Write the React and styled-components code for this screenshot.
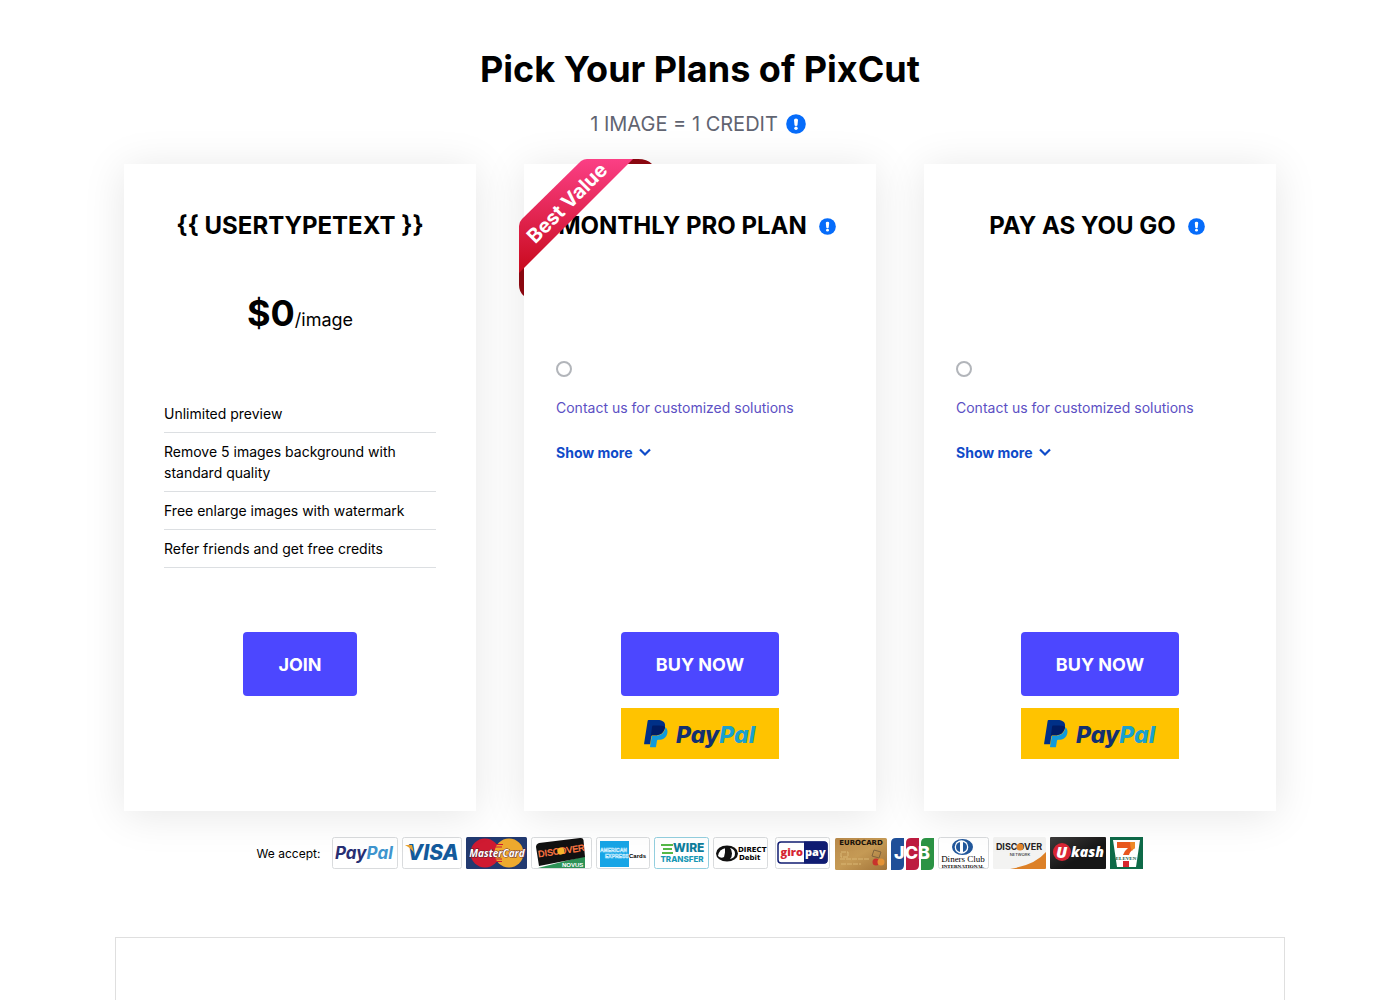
import styled, { createGlobalStyle } from 'styled-components'

const GlobalStyle = createGlobalStyle`
    * {
        box-sizing: border-box;
    }

    body {
        margin: 0;
        background: #fff;
        color: #000;
        font-family: Inter, "Liberation Sans", sans-serif;
        font-size: 14px;
        line-height: 21px;
    }
`

const Page = styled.main`
    padding-top: 47px;
    overflow: hidden;
`

const Heading = styled.h1`
    margin: 0;
    text-align: center;
    font-size: 36px;
    line-height: 44px;
    font-weight: 700;
`

const SubHeading = styled.p`
    display: flex;
    align-items: center;
    justify-content: center;
    gap: 8px;
    margin: 17px 0 24px;
    padding-right: 4px;
    color: #616471;
    font-size: 20px;
    line-height: 32px;
`

const Plans = styled.section`
    display: flex;
    align-items: stretch;
    gap: 48px;
    max-width: 1200px;
    margin: 0 auto;
    padding: 0 24px;
`

const Card = styled.article`
    position: relative;
    display: flex;
    flex: 1;
    flex-direction: column;
    padding: 44px 0 52px;
    background: #fff;
    box-shadow: 0 4px 40px rgba(0, 0, 0, 0.1);
`

const PlanTitle = styled.h2`
    display: flex;
    align-items: center;
    justify-content: center;
    gap: 12px;
    margin: 0;
    padding-right: ${({ $icon }) => ($icon ? 6 : 0)}px;
    font-size: 24px;
    line-height: 36px;
    font-weight: 700;
    white-space: nowrap;
`

const Price = styled.p`
    margin: 44px 0 50px;
    text-align: center;
    font-size: 18px;
    line-height: 51px;

    strong {
        font-size: 36px;
    }
`

const Features = styled.ul`
    margin: 0;
    padding: 0 40px;
    list-style: none;

    li {
        padding: 8px 0;
        border-bottom: 1px solid #dcdfe2;
    }
`

const Options = styled.div`
    display: flex;
    flex-direction: column;
    align-items: flex-start;
    margin-top: 117px;
    padding: 0 32px;
`

const Radio = styled.input`
    appearance: none;
    width: 16px;
    height: 16px;
    margin: 0;
    border: 2px solid #b2b5ba;
    border-radius: 50%;
    background: #fff;

    &:checked {
        border-color: #4c47ff;
    }
`

const ContactLink = styled.a`
    margin: 20px 0 24px;
    color: #5c50c4;
    text-decoration: none;
`

const ShowMore = styled.button`
    display: flex;
    align-items: center;
    gap: 6px;
    padding: 0;
    border: 0;
    background: none;
    color: #0f4bc9;
    font: inherit;
    font-weight: 700;
    cursor: pointer;
`

const Actions = styled.div`
    display: flex;
    flex-direction: column;
    align-items: center;
    gap: 12px;
    min-height: 127px;
    margin-top: ${({ $top }) => $top}px;
`

const BuyButton = styled.button`
    min-width: ${({ $wide }) => ($wide ? 158 : 114)}px;
    height: 64px;
    border: 0;
    border-radius: 4px;
    background: #4c47ff;
    color: #fff;
    font: inherit;
    font-size: 18px;
    font-weight: 700;
    cursor: pointer;
`

const PayPalButton = styled.button`
    display: flex;
    width: 158px;
    height: 51px;
    padding: 0;
    border: 0;
    background: #ffc300;
    cursor: pointer;
`

const Ribbon = styled.svg`
    position: absolute;
    top: -5px;
    left: -5px;
`

const Accept = styled.section`
    display: flex;
    align-items: center;
    justify-content: center;
    gap: 12px;
    margin-top: 25px;
    font-size: 12px;
`

const Methods = styled.div`
    display: flex;
    gap: 4px;
`

const Panel = styled.section`
    max-width: 1170px;
    min-height: 240px;
    margin: 67px auto 0;
    border: 1px solid #dfdfdf;
`

const InfoIcon = ({ size }) => (
    <svg width={size} height={size} viewBox="0 0 20 20" aria-hidden="true">
        <circle cx="10" cy="10" r="9.800" fill="#066cfa" />
        <path d="M8 6a2 1.500 0 0 1 4 0l-.500 5a1.500 1 0 0 1-3 0z" fill="#fff" />
        <circle cx="10" cy="14.300" r="1.700" fill="#fff" />
    </svg>
)

const Chevron = () => (
    <svg width="13" height="13" viewBox="0 0 13 13" aria-hidden="true">
        <path d="M1 3.500l5 5 5-5" fill="none" stroke="currentColor" strokeWidth="2.200" />
    </svg>
)

const BestValue = () => (
    <Ribbon width="134" height="138" viewBox="0 0 134 138">
        <defs>
            <linearGradient id="ribbon" x1="0" y1="0" x2="0" y2="1">
                <stop offset="0" stopColor="#fb3f85" />
                <stop offset="1" stopColor="#c80a1c" />
            </linearGradient>
        </defs>
        <path d="M106 0h13q9 0 14 5h-27zM0 106v20q0 7 5 11v-31z" fill="#8a0710" />
        <path d="M62 2q3-2 6-2h46L0 114V67q0-4 3-7z" fill="url(#ribbon)" />
        <text
            x="48"
            y="51"
            transform="rotate(-45 48 44)"
            textAnchor="middle"
            fontSize="20"
            fontWeight="700"
            fill="#fff"
        >
            Best Value
        </text>
    </Ribbon>
)

const PayPalLogo = () => (
    <svg width="158" height="51" viewBox="0 0 158 51" role="img" aria-label="PayPal">
        <g transform="translate(21 12) scale(1.14)">
            <path
                d="M21.222 6.917a3.35 3.35 0 0 0-.607-.541c-.93 5.032-4.046 7.455-9.179 7.455h-2.19a.563.563 0 0 0-.556.479l-1.693 9.043a.56.56 0 0 0 .554.647h3.882c.46 0 .85-.334.922-.788.06-.26.76-4.852.816-5.09a.932.932 0 0 1 .923-.788h.58c3.76 0 6.705-1.528 7.565-5.946.36-1.847-.066-3.388-1.017-4.471z"
                fill="#119bdc"
            />
            <path
                d="M7.076 21.337H2.47a.641.641 0 0 1-.633-.74L4.944.901C5.026.382 5.474 0 5.998 0h7.46c2.57 0 4.578.543 5.69 1.81 1.01 1.15 1.304 2.42 1.012 4.287-.983 5.487-4.426 7.234-8.724 7.234h-2.19c-.524 0-.968.382-1.05.9z"
                fill="#003087"
            />
            <path
                d="M20.3 6.1c-2-1.1-4.2-1.2-6.5-1.2H9.9c-.6 0-.9.4-1 .9l-1.3 8.9c.2-.9.8-1.3 1.6-1.3h2.2c4.7 0 7.9-2 8.9-7.3z"
                fill="#001c64"
            />
        </g>
        <text x="55" y="35" fontFamily="Inter" fontSize="23" fontWeight="800" fontStyle="italic">
            <tspan fill="#12306f">Pay</tspan>
            <tspan fill="#1aa0cf">Pal</tspan>
        </text>
    </svg>
)

const Logo = ({ width, label, children }) => (
    <svg width={width} height="34" viewBox={`0 0 ${width} 34`} role="img" aria-label={label}>
        {children}
    </svg>
)

const Frame = ({ width, x = 0, stroke = '#d9dbdd' }) => (
    <rect x={x + 0.5} y="1.5" width={width - x - 1} height="31" rx="2" fill="#fff" stroke={stroke} />
)

const PaymentLogos = () => (
    <Methods>
        <Logo width={66} label="PayPal">
            <Frame width={66} />
            <text x="3" y="23" fontFamily="Inter" fontSize="17" fontWeight="700" fontStyle="italic">
                <tspan fill="#282f73">Pay</tspan>
                <tspan fill="#3f95ce">Pal</tspan>
            </text>
        </Logo>
        <Logo width={60} label="Visa">
            <Frame width={60} />
            <text x="5" y="24" fontFamily="Inter" fontSize="21" fontWeight="800" fontStyle="italic" fill="#135a9c">
                VISA
            </text>
            <path d="M3 9h7l2 8q-3-5-9-8z" fill="#e8a331" />
        </Logo>
        <Logo width={61} label="MasterCard">
            <rect y="1" width="61" height="32" rx="1.500" fill="#223a70" />
            <circle cx="19" cy="17" r="14.500" fill="#cf1a31" />
            <circle cx="43" cy="17" r="14.500" fill="#eda92e" />
            <path d="M28 8.500h9M26 11h10M26 23h10M27 25.500h9" stroke="#cf1a31" strokeWidth="1.200" />
            <text
                x="31"
                y="21"
                textAnchor="middle"
                fontFamily="Open Sans"
                fontSize="10"
                fontWeight="700"
                fontStyle="italic"
                fill="#fff"
                stroke="#5b1a2c"
                strokeWidth="1"
                paintOrder="stroke"
            >
                MasterCard
            </text>
        </Logo>
        <Logo width={61} label="Discover Novus">
            <Frame width={61} />
            <path d="M7 32l47-12v12z" fill="#2d9257" />
            <path d="M5 11q0-3 3-4L49 2q3-.500 3.500 2L54 21 8 30z" fill="#111" />
            <g transform="rotate(-8 30 16)">
                <text x="7" y="18" fontFamily="Liberation Sans" fontSize="9" fill="#ff7a45" stroke="#ff7a45" strokeWidth="0.400">
                    DISCOVER
                </text>
                <circle cx="30" cy="15" r="3.600" fill="#f7b52c" />
            </g>
            <text x="31" y="31" fontFamily="Liberation Sans" fontSize="6" fontWeight="700" fill="#fff">NOVUS</text>
        </Logo>
        <Logo width={54} label="American Express Cards">
            <Frame width={54} />
            <rect x="4" y="5" width="29" height="26" fill="#18a5e6" />
            <g fontFamily="Liberation Sans" fontSize="5" fontWeight="700" fill="none" stroke="#d5f1ff" strokeWidth="0.500">
                <text x="4" y="16">AMERICAN</text>
                <text x="9" y="22">EXPRESS</text>
            </g>
            <text x="33" y="22" fontFamily="Liberation Sans" fontSize="6" fontWeight="700">Cards</text>
        </Logo>
        <Logo width={55} label="Wire Transfer">
            <Frame width={55} stroke="#93cfdf" />
            <path d="M7 9h12M9 13h9M8 17h11" stroke="#55b848" strokeWidth="2" />
            <g fontFamily="Inter" fontWeight="800">
                <text x="19" y="16" fontSize="12" fill="#0f7d9b">WIRE</text>
                <text x="28" y="26" fontSize="8" textAnchor="middle" fill="#1798b5">TRANSFER</text>
            </g>
        </Logo>
        <Logo width={56} label="Direct Debit">
            <Frame width={55} />
            <ellipse cx="14" cy="17.500" rx="11" ry="8" fill="#111" />
            <path d="M17 12q5 1 5 5.500T17 23q2-2 2-5.500T17 12z" fill="#fff" />
            <path d="M5 20q1-7 8-8l-2 9q-3 2-6-1z" fill="#fff" />
            <path d="M12 12h3v11h-3z" fill="#111" />
            <g fontFamily="DejaVu Sans" fontSize="7" fontWeight="700">
                <text x="25" y="16">DIRECT</text>
                <text x="26" y="24">Debit</text>
            </g>
        </Logo>
        <Logo width={58} label="giropay">
            <Frame width={57} x={2} />
            <rect x="5" y="6" width="49" height="21" rx="3" fill="#fff" stroke="#101c72" strokeWidth="1.500" />
            <path d="M31 5.500h20q3.500 0 3.500 3.500v15q0 3.500-3.500 3.500H31z" fill="#101c72" />
            <g fontFamily="Open Sans" fontSize="11" fontWeight="800">
                <text x="30" y="20" textAnchor="end" fill="#d52533">giro</text>
                <text x="32" y="20" fill="#fff">pay</text>
            </g>
        </Logo>
        <Logo width={52} label="Eurocard">
            <defs>
                <linearGradient id="gold" x1="0" y1="0" x2="1" y2="1">
                    <stop offset="0" stopColor="#b98a4b" />
                    <stop offset="0.500" stopColor="#c59a55" />
                    <stop offset="1" stopColor="#a07238" />
                </linearGradient>
            </defs>
            <rect y="2" width="52" height="32" rx="1.500" fill="url(#gold)" />
            <text x="26" y="9" textAnchor="middle" fontFamily="DejaVu Sans" fontSize="7" fontWeight="700" fill="#17110a">
                EUROCARD
            </text>
            <path d="M6 16h7v5H6zM5 23h30M6 28h20" fill="none" stroke="#dab775" strokeDasharray="5 1" />
            <path d="M39 14l7 2-2 6-7-2z" fill="none" stroke="#80643d" />
            <circle cx="41" cy="26" r="3.500" fill="#c8332c" />
            <circle cx="46" cy="26" r="3.500" fill="#e49336" />
        </Logo>
        <Logo width={43} label="JCB">
            <path d="M5 2h8v27q0 5-5 5H0V7q0-5 5-5z" fill="#1f4f98" />
            <path d="M20 2h8v27q0 5-5 5h-8V7q0-5 5-5z" fill="#bd1c40" />
            <path d="M35 2h8v27q0 5-5 5h-8V7q0-5 5-5z" fill="#2b9344" />
            <text x="21" y="23" textAnchor="middle" fontFamily="Inter" fontSize="18" fontWeight="800" fill="#fff">
                JCB
            </text>
        </Logo>
        <Logo width={51} label="Diners Club International">
            <Frame width={51} />
            <ellipse cx="24.500" cy="11" rx="10.500" ry="8" fill="#21579b" />
            <circle cx="23.500" cy="11" r="6.800" fill="#fff" />
            <path d="M22 6v10q-4-1-4-5t4-5zM25 6v10q4-1 4-5t-4-5z" fill="#21579b" />
            <g fontFamily="Liberation Serif" textAnchor="middle">
                <text x="25" y="26" fontSize="9">Diners Club</text>
                <text x="25" y="32" fontSize="5" fontWeight="700">INTERNATIONAL</text>
            </g>
        </Logo>
        <Logo width={53} label="Discover Network">
            <rect y="1" width="53" height="32" rx="1.500" fill="#f3f3f2" />
            <path d="M53 16v16q0 1-1 1H17q25-4 36-17z" fill="#dc8027" />
            <g fontFamily="Inter" textAnchor="middle">
                <text x="26" y="14" fontSize="9" fontWeight="700" fill="#262223">DISCOVER</text>
                <text x="27" y="20" fontSize="4">NETWORK</text>
            </g>
            <circle cx="27" cy="11" r="3.600" fill="#df852c" />
        </Logo>
        <Logo width={56} label="Ukash">
            <defs>
                <linearGradient id="ukash" x1="0" y1="0" x2="1" y2="1">
                    <stop offset="0" stopColor="#3e3c3c" />
                    <stop offset="0.600" stopColor="#161616" />
                </linearGradient>
            </defs>
            <rect y="1" width="56" height="32" rx="1" fill="url(#ukash)" />
            <circle cx="12" cy="16" r="9" fill="#d92635" />
            <g fontFamily="Open Sans" fontWeight="800" fill="#fff">
                <text x="6" y="22" fontSize="16" fontStyle="italic">U</text>
                <text x="21" y="21" fontSize="14" fontStyle="italic">kash</text>
            </g>
        </Logo>
        <Logo width={33} label="7-Eleven">
            <rect y="1" width="33" height="32" fill="#0e6a48" />
            <path d="M3 4h27l-4 27H7z" fill="#fff" />
            <path d="M7 6h18v6q-5 3-6 7h-6q1-4 5-7H7z" fill="#e9571f" />
            <path d="M20 6h5v6q-2 1-3 3-2-4-2-9z" fill="#ef8b28" />
            <path d="M13 25h6v6h-6z" fill="#d6282e" />
            <text x="16" y="24" textAnchor="middle" fontFamily="Liberation Serif" fontSize="5" fontWeight="700" fill="#0e5a3e">
                ELEVEN
            </text>
        </Logo>
    </Methods>
)

const features = [
    'Unlimited preview',
    'Remove 5 images background with standard quality',
    'Free enlarge images with watermark',
    'Refer friends and get free credits',
]

const paidPlans = [
    { id: 'monthly', title: 'MONTHLY PRO PLAN', best: true },
    { id: 'payg', title: 'PAY AS YOU GO', best: false },
]

const PaidPlan = ({ plan }) => (
    <Card>
        <PlanTitle $icon>
            {plan.title}
            <InfoIcon size={17} />
        </PlanTitle>
        {plan.best && <BestValue />}
        <Options>
            <Radio type="radio" name={plan.id} aria-label={plan.title} />
            <ContactLink href="#contact">Contact us for customized solutions</ContactLink>
            <ShowMore type="button">
                Show more
                <Chevron />
            </ShowMore>
        </Options>
        <Actions $top={169}>
            <BuyButton type="button" $wide>BUY NOW</BuyButton>
            <PayPalButton type="button">
                <PayPalLogo />
            </PayPalButton>
        </Actions>
    </Card>
)

const App = () => {

    return (
        <>
            <GlobalStyle />
            <Page>
                <Heading>Pick Your Plans of PixCut</Heading>
                <SubHeading>
                    1 IMAGE = 1 CREDIT
                    <InfoIcon size={20} />
                </SubHeading>
                <Plans>
                    <Card>
                        <PlanTitle>{'{{ USERTYPETEXT }}'}</PlanTitle>
                        <Price><strong>$0</strong>/image</Price>
                        <Features>
                            {features.map((text) => <li key={text}>{text}</li>)}
                        </Features>
                        <Actions $top={64}>
                            <BuyButton type="button">JOIN</BuyButton>
                        </Actions>
                    </Card>
                    {paidPlans.map((plan) => <PaidPlan key={plan.id} plan={plan} />)}
                </Plans>
                <Accept>
                    <span>We accept:</span>
                    <PaymentLogos />
                </Accept>
                <Panel />
            </Page>
        </>
    )
}

export default App
